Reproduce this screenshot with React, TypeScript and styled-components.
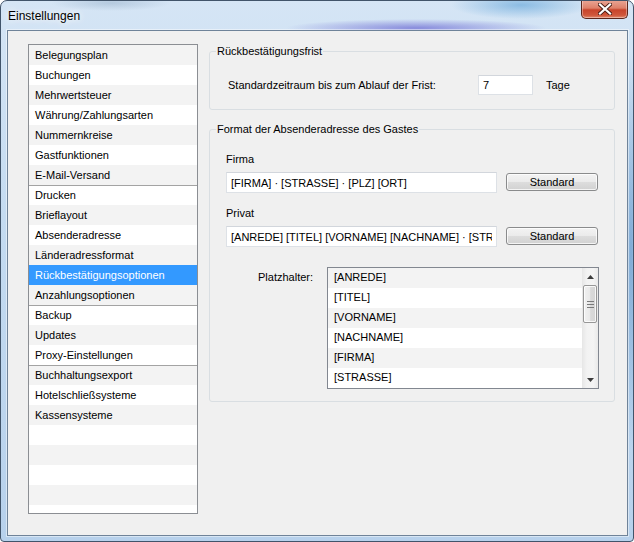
import React from 'react';
import styled, { createGlobalStyle } from 'styled-components';

const GlobalStyle = createGlobalStyle`
  html, body { margin: 0; padding: 0; }
  body {
    width: 634px;
    height: 542px;
    overflow: hidden;
    font-family: "Liberation Sans", Arial, sans-serif;
    font-size: 11px;
    color: #000;
    background: #ffffff;
  }
  * { box-sizing: border-box; }
`;

const Window = styled.div`
  width: 634px;
  height: 542px;
  border: 1px solid #41546a;
  border-radius: 7px 7px 4px 4px;
  display: flex;
  flex-direction: column;
  padding: 0 5px 5px 6px;
  overflow: hidden;
  background:
    radial-gradient(ellipse 130px 9px at 415px 27px, rgba(118, 118, 214, 0.8), rgba(118, 118, 214, 0) 100%),
    radial-gradient(ellipse 70px 14px at 520px 4px, rgba(90, 160, 215, 0.6), rgba(90, 160, 215, 0) 100%),
    radial-gradient(ellipse 60px 8px at 110px 2px, rgba(120, 150, 180, 0.35), rgba(120, 150, 180, 0) 100%),
    radial-gradient(ellipse 8px 200px at 630px 250px, rgba(70, 130, 190, 0.55), rgba(70, 130, 190, 0) 100%),
    linear-gradient(180deg, #d5e5f5 0%, #c4dbf1 40%, #b7d1ec 100%);
`;

const TitleBar = styled.div`
  height: 29px;
  flex: none;
  display: flex;
  justify-content: space-between;
  align-items: flex-start;
`;

const Title = styled.span`
  margin-top: 8px;
  margin-left: 1px;
  font-size: 12px;
  line-height: 14px;
  color: #000;
  text-shadow: 0 0 6px rgba(255, 255, 255, 0.95), 0 0 10px rgba(255, 255, 255, 0.8);
`;

const CloseButton = styled.div`
  width: 47px;
  height: 19px;
  margin-top: -1px;
  border: 1px solid #5b261c;
  border-top: none;
  border-radius: 0 0 5px 5px;
  background: linear-gradient(180deg, #eaa797 0%, #de8069 45%, #c8442b 55%, #d0583c 85%, #e38d70 100%);
  box-shadow: inset 0 0 0 1px rgba(255, 255, 255, 0.35);
  display: flex;
  align-items: center;
  justify-content: center;
`;

const Client = styled.div`
  flex: 1;
  border: 1px solid #6f8399;
  background: #f0f0f0;
  display: flex;
  gap: 11px;
  padding: 13px 12px 0 20px;
  box-shadow: 0 0 0 1px rgba(255, 255, 255, 0.45);
`;

const SideList = styled.div`
  width: 170px;
  height: 470px;
  flex: none;
  border: 1px solid #8b8e93;
  background: #fff;
  overflow: hidden;
`;

const SideItem = styled.div<{ $alt: boolean; $selected?: boolean; $groupStart?: boolean }>`
  height: 20px;
  line-height: ${(p) => (p.$groupStart ? 19 : 20)}px;
  padding-left: 6px;
  white-space: nowrap;
  background: ${(p) => (p.$selected ? '#3399ff' : p.$alt ? '#f3f3f3' : '#ffffff')};
  color: ${(p) => (p.$selected ? '#ffffff' : '#000000')};
  border-top: ${(p) => (p.$groupStart ? '1px solid #a3a3a3' : 'none')};
`;

const RightColumn = styled.div`
  width: 406px;
  flex: none;
  display: flex;
  flex-direction: column;
  gap: 12px;
`;

const GroupBox = styled.fieldset`
  margin: 0;
  min-width: 0;
  border: 1px solid #d9dee2;
  border-radius: 3px;
  padding: 0;
`;

const GroupLegend = styled.legend`
  padding: 0 1px;
  margin-left: 6px;
  line-height: 14px;
  font-size: 11px;
`;

const GroupContent = styled.div<{ $pad: string }>`
  padding: ${(p) => p.$pad};
`;

const FristRow = styled.div`
  display: flex;
  align-items: center;
`;

const FristLabel = styled.span`
  width: 250px;
  flex: none;
`;

const TextBox = styled.input<{ $width: number }>`
  width: ${(p) => p.$width}px;
  height: ${(p) => (p.$width < 100 ? 20 : 21)}px;
  flex: none;
  border: 1px solid #dde1e6;
  border-top-color: #d2d6dc;
  background: #fff;
  font-family: inherit;
  font-size: 11px;
  color: #000;
  padding: 0 4px;
  margin: 0;
  outline: none;
`;

const UnitLabel = styled.span`
  margin-left: 13px;
`;

const FieldLabel = styled.div<{ $top: number }>`
  margin-top: ${(p) => p.$top}px;
  line-height: 14px;
`;

const FieldRow = styled.div`
  display: flex;
  align-items: flex-start;
  margin-top: 6px;
`;

const WinButton = styled.button`
  width: 92px;
  height: 18px;
  margin: 1px 0 0 9px;
  padding: 0;
  border: 1px solid #8a8b8c;
  border-radius: 3px;
  background: linear-gradient(180deg, #f3f3f3 0%, #ebebeb 48%, #dddddd 52%, #d1d1d1 100%);
  box-shadow: inset 0 0 0 1px rgba(255, 255, 255, 0.75);
  font-family: inherit;
  font-size: 11px;
  color: #000;
  line-height: 15px;
`;

const PlaceholderRow = styled.div`
  display: grid;
  grid-template-columns: 101px 272px;
  margin-top: 20px;
`;

const PlaceholderLabel = styled.div`
  padding: 3px 0 0 32px;
  line-height: 14px;
`;

const ListBox = styled.div`
  height: 122px;
  border: 1px solid #828790;
  background: #fff;
  display: flex;
  overflow: hidden;
`;

const ListRows = styled.div`
  flex: 1;
`;

const ListRow = styled.div<{ $alt: boolean }>`
  height: 20px;
  line-height: 19px;
  padding-left: 6px;
  background: ${(p) => (p.$alt ? '#f3f3f3' : '#ffffff')};
`;

const ScrollBar = styled.div`
  width: 16px;
  flex: none;
  display: flex;
  flex-direction: column;
  background: linear-gradient(90deg, #e6e6e6 0%, #f2f2f2 30%, #f4f4f4 70%, #e9e9e9 100%);
`;

const ScrollArrow = styled.div`
  height: 17px;
  flex: none;
  display: flex;
  align-items: center;
  justify-content: center;
`;

const ScrollTrack = styled.div`
  flex: 1;
  padding: 0 1px;
`;

const ScrollThumb = styled.div`
  height: 38px;
  border: 1px solid #979797;
  border-radius: 2px;
  background: linear-gradient(90deg, #f1f1f1 0%, #e9e9e9 50%, #d9d9d9 55%, #d6d6d6 100%);
  box-shadow: inset 0 0 0 1px rgba(255, 255, 255, 0.8);
  display: flex;
  align-items: center;
  justify-content: center;
`;

const sideItems: { label: string; groupStart?: boolean }[] = [
  { label: 'Belegungsplan' },
  { label: 'Buchungen' },
  { label: 'Mehrwertsteuer' },
  { label: 'Währung/Zahlungsarten' },
  { label: 'Nummernkreise' },
  { label: 'Gastfunktionen' },
  { label: 'E-Mail-Versand' },
  { label: 'Drucken', groupStart: true },
  { label: 'Brieflayout' },
  { label: 'Absenderadresse' },
  { label: 'Länderadressformat' },
  { label: 'Rückbestätigungsoptionen' },
  { label: 'Anzahlungsoptionen' },
  { label: 'Backup', groupStart: true },
  { label: 'Updates' },
  { label: 'Proxy-Einstellungen' },
  { label: 'Buchhaltungsexport', groupStart: true },
  { label: 'Hotelschließsysteme' },
  { label: 'Kassensysteme' },
  { label: '' },
  { label: '' },
  { label: '' },
  { label: '' },
  { label: '' },
];

const placeholders = ['[ANREDE]', '[TITEL]', '[VORNAME]', '[NACHNAME]', '[FIRMA]', '[STRASSE]'];

const CloseGlyph = () => (
  <svg width="14" height="12" viewBox="0 0 14 12">
    <path d="M2 1.5 L12 10.5 M12 1.5 L2 10.5" stroke="#4a1e16" strokeWidth="4" strokeLinecap="square" />
    <path d="M2 1.5 L12 10.5 M12 1.5 L2 10.5" stroke="#ffffff" strokeWidth="2.2" strokeLinecap="square" />
  </svg>
);

const Arrow = ({ up }: { up: boolean }) => (
  <svg width="7" height="4" viewBox="0 0 7 4">
    <path d={up ? 'M0 4 L3.5 0 L7 4 Z' : 'M0 0 L7 0 L3.5 4 Z'} fill="#3c3c3c" />
  </svg>
);

const Grip = () => (
  <svg width="7" height="7" viewBox="0 0 7 7">
    <path d="M0 0.5 H7 M0 3.5 H7 M0 6.5 H7" stroke="#7a7a7a" strokeWidth="1" />
  </svg>
);

export default function App() {
  return (
    <>
      <GlobalStyle />
      <Window>
        <TitleBar>
          <Title>Einstellungen</Title>
          <CloseButton>
            <CloseGlyph />
          </CloseButton>
        </TitleBar>
        <Client>
          <SideList>
            {sideItems.map((item, i) => (
              <SideItem
                key={i}
                $alt={i % 2 === 0}
                $selected={item.label === 'Rückbestätigungsoptionen'}
                $groupStart={item.groupStart}
              >
                {item.label}
              </SideItem>
            ))}
          </SideList>
          <RightColumn>
            <GroupBox>
              <GroupLegend>Rückbestätigungsfrist</GroupLegend>
              <GroupContent $pad="17px 12px 14px 18px">
                <FristRow>
                  <FristLabel>Standardzeitraum bis zum Ablauf der Frist:</FristLabel>
                  <TextBox $width={55} readOnly value="7" />
                  <UnitLabel>Tage</UnitLabel>
                </FristRow>
              </GroupContent>
            </GroupBox>
            <GroupBox>
              <GroupLegend>Format der Absenderadresse des Gastes</GroupLegend>
              <GroupContent $pad="16px 12px 12px 16px">
                <FieldLabel $top={0}>Firma</FieldLabel>
                <FieldRow>
                  <TextBox $width={271} readOnly value="[FIRMA] · [STRASSE] · [PLZ] [ORT]" />
                  <WinButton>Standard</WinButton>
                </FieldRow>
                <FieldLabel $top={13}>Privat</FieldLabel>
                <FieldRow>
                  <TextBox
                    $width={271}
                    readOnly
                    value="[ANREDE] [TITEL] [VORNAME] [NACHNAME] · [STRASSE] · [PLZ] [ORT]"
                  />
                  <WinButton>Standard</WinButton>
                </FieldRow>
                <PlaceholderRow>
                  <PlaceholderLabel>Platzhalter:</PlaceholderLabel>
                  <ListBox>
                    <ListRows>
                      {placeholders.map((p, i) => (
                        <ListRow key={p} $alt={i % 2 === 0}>
                          {p}
                        </ListRow>
                      ))}
                    </ListRows>
                    <ScrollBar>
                      <ScrollArrow>
                        <Arrow up />
                      </ScrollArrow>
                      <ScrollTrack>
                        <ScrollThumb>
                          <Grip />
                        </ScrollThumb>
                      </ScrollTrack>
                      <ScrollArrow>
                        <Arrow up={false} />
                      </ScrollArrow>
                    </ScrollBar>
                  </ListBox>
                </PlaceholderRow>
              </GroupContent>
            </GroupBox>
          </RightColumn>
        </Client>
      </Window>
    </>
  );
}
